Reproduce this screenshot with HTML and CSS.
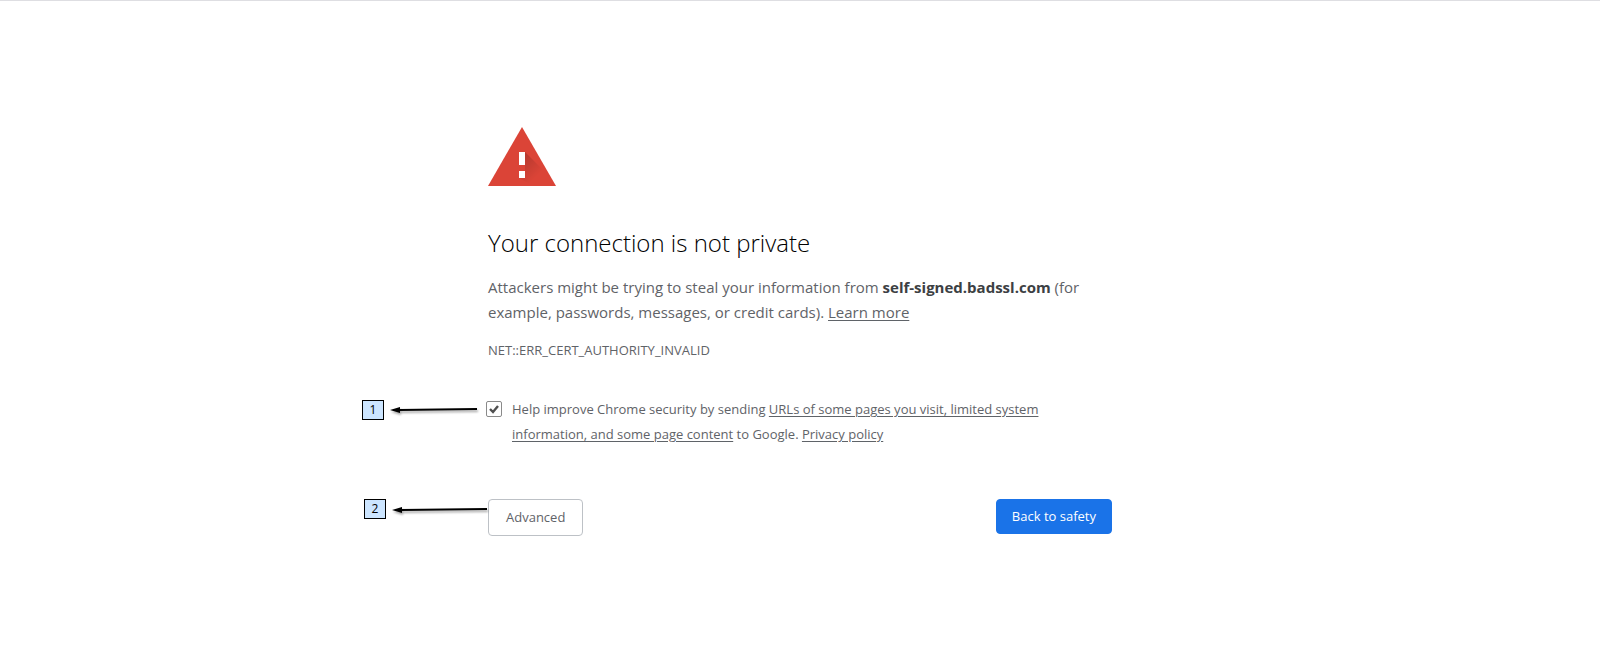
FILE: index.html
```html
<!DOCTYPE html>
<html lang="en">
<head>
  <meta charset="UTF-8">
  <title>Privacy error</title>
  <meta name="viewport" content="width=device-width, initial-scale=1.0">
  <link rel="stylesheet" href="styles.css">
</head>
<body>

  <main class="interstitial">
    <svg class="warning-icon" viewBox="0 0 72 72" aria-hidden="true">
      <defs>
        <linearGradient id="shade" x1="34" y1="26" x2="56" y2="48" gradientUnits="userSpaceOnUse">
          <stop offset="0" stop-color="#000" stop-opacity=".22"/>
          <stop offset="1" stop-color="#000" stop-opacity="0"/>
        </linearGradient>
      </defs>
      <path fill="#db4437" d="M34 6 68 65H0z"/>
      <path fill="url(#shade)" d="M37 31 56 50 65 65H46L31 57 37 51z"/>
      <path fill="#fff" d="M31 31h6v13h-6zM31 50h6v7h-6z"/>
    </svg>

    <h1>Your connection is not private</h1>
    <p class="message">Attackers might be trying to steal your information from <strong>self-signed.badssl.com</strong> (for example, passwords, messages, or credit cards). <a href="#">Learn more</a></p>
    <div class="error-code">NET::ERR_CERT_AUTHORITY_INVALID</div>

    <div class="opt-in">
      <div class="callout">
        <span class="callout-number">1</span>
        <svg class="callout-arrow" viewBox="0 0 88 12" aria-hidden="true">
          <path d="M9 6 87 5" stroke="#000" stroke-width="2"/>
          <path d="M0 6 10 3V9z"/>
        </svg>
      </div>
      <input type="checkbox" id="reporting" checked>
      <label for="reporting">Help improve Chrome security by sending <a href="#">URLs of some pages you visit, limited system information, and some page content</a> to Google. <a href="#">Privacy policy</a></label>
    </div>

    <div class="buttons">
      <div class="callout">
        <span class="callout-number">2</span>
        <svg class="callout-arrow long" viewBox="0 0 96 12" aria-hidden="true">
          <path d="M9 7 95 6" stroke="#000" stroke-width="2"/>
          <path d="M0 7 10 4V10z"/>
        </svg>
      </div>
      <button type="button" class="secondary">Advanced</button>
      <button type="button" class="primary">Back to safety</button>
    </div>
  </main>

</body>
</html>
```

FILE: styles.css
```css
* {
  box-sizing: border-box;
}

body {
  margin: 0;
  border-top: 1px solid #dedee2;
  background: #fff;
  color: #5f6368;
  font-family: "Segoe UI", "Open Sans", "Noto Sans", sans-serif;
  font-size: 13px;
}

.interstitial {
  max-width: 624px;
  margin: 0 auto;
  padding-top: 120px;
}

.warning-icon {
  display: block;
  width: 72px;
  height: 72px;
  margin-bottom: 30px;
}

h1 {
  margin: 0 0 12px;
  color: #000;
  font-size: 24px;
  font-weight: 300;
  line-height: 40px;
}

.message {
  margin: 0;
  font-size: 15px;
  line-height: 25px;
}

.message strong {
  color: #3c4043;
}

a {
  color: inherit;
  text-decoration: underline;
  text-underline-offset: 2px;
}

.error-code {
  margin-top: 13px;
  line-height: 25px;
}

.opt-in {
  position: relative;
  display: flex;
  gap: 10px;
  margin-top: 34px;
  margin-left: -2px;
  padding-right: 60px;
  line-height: 25px;
}

.opt-in input {
  appearance: none;
  flex: none;
  width: 16px;
  height: 16px;
  margin: 4px 0 0;
  border: 1px solid #8a8a8a;
  border-radius: 2px;
  background: #fff;
}

.opt-in input:checked {
  background: url("data:image/svg+xml,%3Csvg xmlns='http://www.w3.org/2000/svg' viewBox='0 0 14 14'%3E%3Cpath d='M3 7l3 3 5-6' fill='none' stroke='%23505050' stroke-width='2.4'/%3E%3C/svg%3E") center / 14px no-repeat;
}

.buttons {
  position: relative;
  display: flex;
  justify-content: space-between;
  align-items: flex-start;
  margin-top: 52px;
}

button {
  border: 1px solid #1a73e8;
  border-radius: 4px;
  font: inherit;
}

.primary {
  padding: 0 15px;
  background: #1a73e8;
  color: #fff;
  line-height: 33px;
}

.secondary {
  padding: 0 17px;
  border-color: #bdc1c6;
  background: #fff;
  color: #5f6368;
  line-height: 35px;
}

/* Numbered pointers that hang to the left of a row */
.callout {
  position: absolute;
  top: 0;
  left: -124px;
  display: flex;
  align-items: center;
  gap: 6px;
}

.opt-in .callout {
  top: 3px;
}

.callout-number {
  width: 22px;
  border: 1px solid #000;
  background: #cce5ff;
  color: #000;
  font-size: 12px;
  line-height: 18px;
  text-align: center;
}

.callout-arrow {
  width: 88px;
  height: 12px;
  filter: drop-shadow(1px 2px 1px rgba(0, 0, 0, .35));
}

.callout-arrow.long {
  width: 96px;
}
```
